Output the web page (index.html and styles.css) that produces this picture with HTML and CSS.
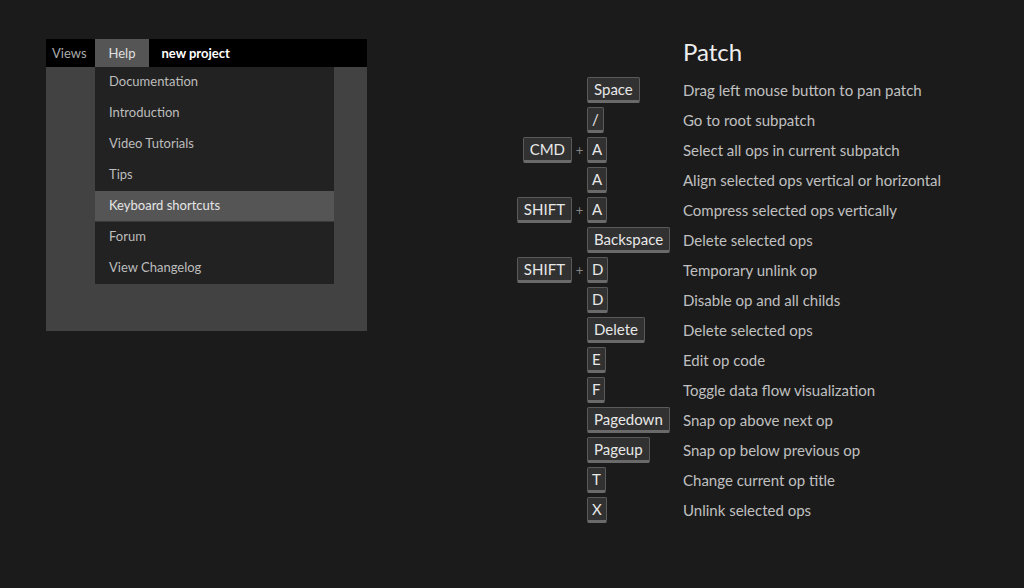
FILE: index.html
```html
<!DOCTYPE html>
<html>
<head>
<meta charset="utf-8">
<link rel="stylesheet" href="styles.css">
</head>
<body>
<div class="page">
  <div class="app">
    <div class="menubar">
      <span class="menu-item">Views</span>
      <span class="menu-item active">Help</span>
      <span class="menu-item project">new project</span>
    </div>
    <ul class="dropdown">
      <li>Documentation</li>
      <li>Introduction</li>
      <li>Video Tutorials</li>
      <li>Tips</li>
      <li class="hover">Keyboard shortcuts</li>
      <li>Forum</li>
      <li>View Changelog</li>
    </ul>
  </div>

  <div class="shortcuts">
    <h1 class="title">Patch</h1>

    <div class="mod"></div><div class="key"><kbd>Space</kbd></div><div class="desc">Drag left mouse button to pan patch</div>
    <div class="mod"></div><div class="key"><kbd class="single">/</kbd></div><div class="desc">Go to root subpatch</div>
    <div class="mod"><kbd>CMD</kbd><span class="plus">+</span></div><div class="key"><kbd class="single">A</kbd></div><div class="desc">Select all ops in current subpatch</div>
    <div class="mod"></div><div class="key"><kbd class="single">A</kbd></div><div class="desc">Align selected ops vertical or horizontal</div>
    <div class="mod"><kbd>SHIFT</kbd><span class="plus">+</span></div><div class="key"><kbd class="single">A</kbd></div><div class="desc">Compress selected ops vertically</div>
    <div class="mod"></div><div class="key"><kbd>Backspace</kbd></div><div class="desc">Delete selected ops</div>
    <div class="mod"><kbd>SHIFT</kbd><span class="plus">+</span></div><div class="key"><kbd class="single">D</kbd></div><div class="desc">Temporary unlink op</div>
    <div class="mod"></div><div class="key"><kbd class="single">D</kbd></div><div class="desc">Disable op and all childs</div>
    <div class="mod"></div><div class="key"><kbd>Delete</kbd></div><div class="desc">Delete selected ops</div>
    <div class="mod"></div><div class="key"><kbd class="single">E</kbd></div><div class="desc">Edit op code</div>
    <div class="mod"></div><div class="key"><kbd class="single">F</kbd></div><div class="desc">Toggle data flow visualization</div>
    <div class="mod"></div><div class="key"><kbd>Pagedown</kbd></div><div class="desc">Snap op above next op</div>
    <div class="mod"></div><div class="key"><kbd>Pageup</kbd></div><div class="desc">Snap op below previous op</div>
    <div class="mod"></div><div class="key"><kbd class="single">T</kbd></div><div class="desc">Change current op title</div>
    <div class="mod"></div><div class="key"><kbd class="single">X</kbd></div><div class="desc">Unlink selected ops</div>
  </div>
</div>
</body>
</html>
```

FILE: styles.css
```css
html, body {
  margin: 0;
  padding: 0;
  background: #1b1b1b;
  font-family: Lato, "Liberation Sans", sans-serif;
  width: 1024px;
  height: 588px;
  overflow: hidden;
}

.page {
  display: flex;
  align-items: flex-start;
  padding: 39px 0 0 46px;
}

.app {
  width: 321px;
  height: 292px;
  background: #424242;
  display: flex;
  flex-direction: column;
}

.menubar {
  height: 28px;
  background: #000;
  display: flex;
  align-items: stretch;
  font-size: 13px;
}

.menu-item {
  display: flex;
  align-items: center;
  padding: 0 8px 0 6px;
  color: #aaa;
}

.menu-item.active {
  background: #555;
  color: #e0e0e0;
  padding: 0 14px;
}

.menu-item.project {
  color: #fff;
  font-weight: bold;
  padding-left: 12px;
}

.dropdown {
  list-style: none;
  margin: 0 0 0 49px;
  padding: 0;
  width: 239px;
  background: #222;
  font-size: 13px;
  color: #bdbdbd;
}

.dropdown li {
  height: 31px;
  line-height: 29px;
  padding-left: 14px;
  box-sizing: border-box;
}

.dropdown li.hover {
  background: #555;
  color: #e6e6e6;
  border-bottom: 1px solid #3a3a3a;
}

.shortcuts {
  margin-left: 140px;
  display: grid;
  grid-template-columns: 80px 96px auto;
  row-gap: 4px;
  align-items: center;
}

.title {
  grid-column: 3;
  margin: 0 0 8px 0;
  font-size: 24px;
  line-height: 26px;
  font-weight: normal;
  color: #eee;
}

.mod {
  display: flex;
  justify-content: flex-end;
  align-items: center;
  height: 26px;
}

.plus {
  width: 15px;
  text-align: center;
  color: #888;
  font-size: 13px;
}

.key {
  display: flex;
  height: 26px;
}

kbd {
  font-family: Lato, "Liberation Sans", sans-serif;
  font-size: 15px;
  color: #e8e8e8;
  background: #313131;
  border: 1px solid #5a5a5a;
  border-bottom: 3px solid #6a6a6a;
  border-radius: 2px;
  padding: 0 6px;
  height: 22px;
  line-height: 22px;
  text-align: center;
  box-sizing: content-box;
}

kbd.single {
  padding: 0 4px;
}

.desc {
  color: #c0c0c0;
  font-size: 15px;
  white-space: nowrap;
}
```
